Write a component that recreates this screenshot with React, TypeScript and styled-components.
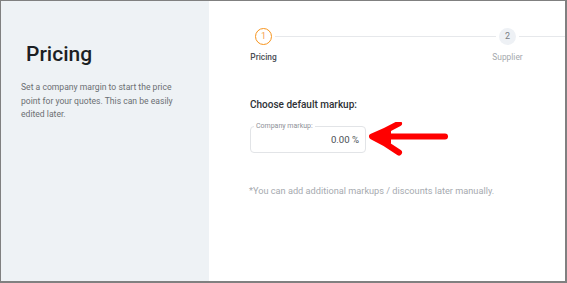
import React from "react";
import styled, { createGlobalStyle } from "styled-components";

const Global = createGlobalStyle`
  html, body { margin: 0; padding: 0; background: #fff; }
  body { font-family: Roboto, "Liberation Sans", Arial, sans-serif; }
  * { box-sizing: border-box; }
`;

const Frame = styled.div`
  width: 567px;
  height: 283px;
  display: flex;
  border-style: solid;
  border-color: #808080;
  border-width: 1px 2px 2px 1px;
  overflow: hidden;
`;

const Sidebar = styled.aside`
  width: 208px;
  flex: none;
  background: #eef2f5;
  padding: 41px 0 0 20px;
`;

const Title = styled.h1`
  margin: 0 0 0 5px;
  font-size: 21px;
  font-weight: 500;
  line-height: 24px;
  color: #1c1f24;
`;

const Description = styled.p`
  margin: 15px 0 0 0;
  width: 160px;
  font-size: 8.6px;
  line-height: 13.5px;
  color: #6b6f73;
`;

const Main = styled.main`
  flex: 1;
  background: #fff;
  padding: 27px 0 0 41px;
  display: flex;
  flex-direction: column;
`;

const Stepper = styled.div`
  display: flex;
  align-items: flex-start;
  margin-left: 2px;
`;

const Step = styled.div`
  width: 23px;
  flex: none;
  display: flex;
  flex-direction: column;
  align-items: center;
`;

const Circle = styled.div<{ $active?: boolean }>`
  width: 17px;
  height: 17px;
  border-radius: 50%;
  display: flex;
  align-items: center;
  justify-content: center;
  font-size: 9px;
  line-height: 1;
  border: ${(p) => (p.$active ? "1.6px solid #f7941d" : "none")};
  background: ${(p) => (p.$active ? "#fff" : "#eef1f5")};
  color: ${(p) => (p.$active ? "#f5a050" : "#7a7f86")};
`;

const StepLabel = styled.div<{ $active?: boolean }>`
  margin-top: 7px;
  white-space: nowrap;
  font-size: 8.4px;
  line-height: 10px;
  font-weight: ${(p) => (p.$active ? 500 : 400)};
  color: ${(p) => (p.$active ? "#4a4e54" : "#a4a8ad")};
`;

const Connector = styled.div<{ $width?: number }>`
  height: 1px;
  margin-top: 8px;
  background: #e6e8eb;
  flex: ${(p) => (p.$width ? `0 0 ${p.$width}px` : "1")};
`;

const SectionTitle = styled.h2`
  margin: 37px 0 0 0;
  font-size: 10px;
  line-height: 12px;
  font-weight: 500;
  color: #2e3136;
`;

const InputRow = styled.div`
  margin-top: 11px;
  display: flex;
  align-items: center;
  gap: 3px;
`;

const Field = styled.fieldset`
  margin: 0;
  width: 116px;
  height: 27px;
  border: 1px solid #e2e4e7;
  border-radius: 4px;
  padding: 0 6px 0 5px;
  position: relative;
  display: flex;
  align-items: center;
  justify-content: flex-end;
`;

const Legend = styled.span`
  position: absolute;
  top: -5px;
  left: 3px;
  padding: 0 2px;
  background: #fff;
  font-size: 7px;
  line-height: 9px;
  color: #8d9197;
`;

const Value = styled.span`
  font-size: 9.6px;
  line-height: 12px;
  color: #4a4e54;
  margin-top: 1px;
`;

const Note = styled.p`
  margin: 29px 0 0 -1px;
  font-size: 9.2px;
  line-height: 11px;
  color: #a6aaaf;
`;

const Arrow = () => (
  <svg width="80" height="34" viewBox="0 0 80 34" aria-hidden="true">
    <path
      d="M76 14.5 L8 14.5"
      stroke="#ff0000"
      strokeWidth="6"
      strokeLinecap="round"
      fill="none"
    />
    <path
      d="M30 1.5 Q17 9 3 14.5 Q17 21 30 30.5"
      stroke="#ff0000"
      strokeWidth="6"
      strokeLinecap="round"
      strokeLinejoin="round"
      fill="none"
    />
    <path d="M3 14.5 L22 7 L22 22 Z" fill="#ff0000" />
  </svg>
);

export default function App() {
  return (
    <>
      <Global />
      <Frame>
        <Sidebar>
          <Title>Pricing</Title>
          <Description>
            Set a company margin to start the price point for your quotes. This
            can be easily edited later.
          </Description>
        </Sidebar>
        <Main>
          <Stepper>
            <Step>
              <Circle $active>1</Circle>
              <StepLabel $active>Pricing</StepLabel>
            </Step>
            <Connector $width={221} />
            <Step>
              <Circle>2</Circle>
              <StepLabel>Supplier</StepLabel>
            </Step>
            <Connector />
          </Stepper>
          <SectionTitle>Choose default markup:</SectionTitle>
          <InputRow>
            <Field>
              <Legend>Company markup:</Legend>
              <Value>0.00 %</Value>
            </Field>
            <Arrow />
          </InputRow>
          <Note>*You can add additional markups / discounts later manually.</Note>
        </Main>
      </Frame>
    </>
  );
}
